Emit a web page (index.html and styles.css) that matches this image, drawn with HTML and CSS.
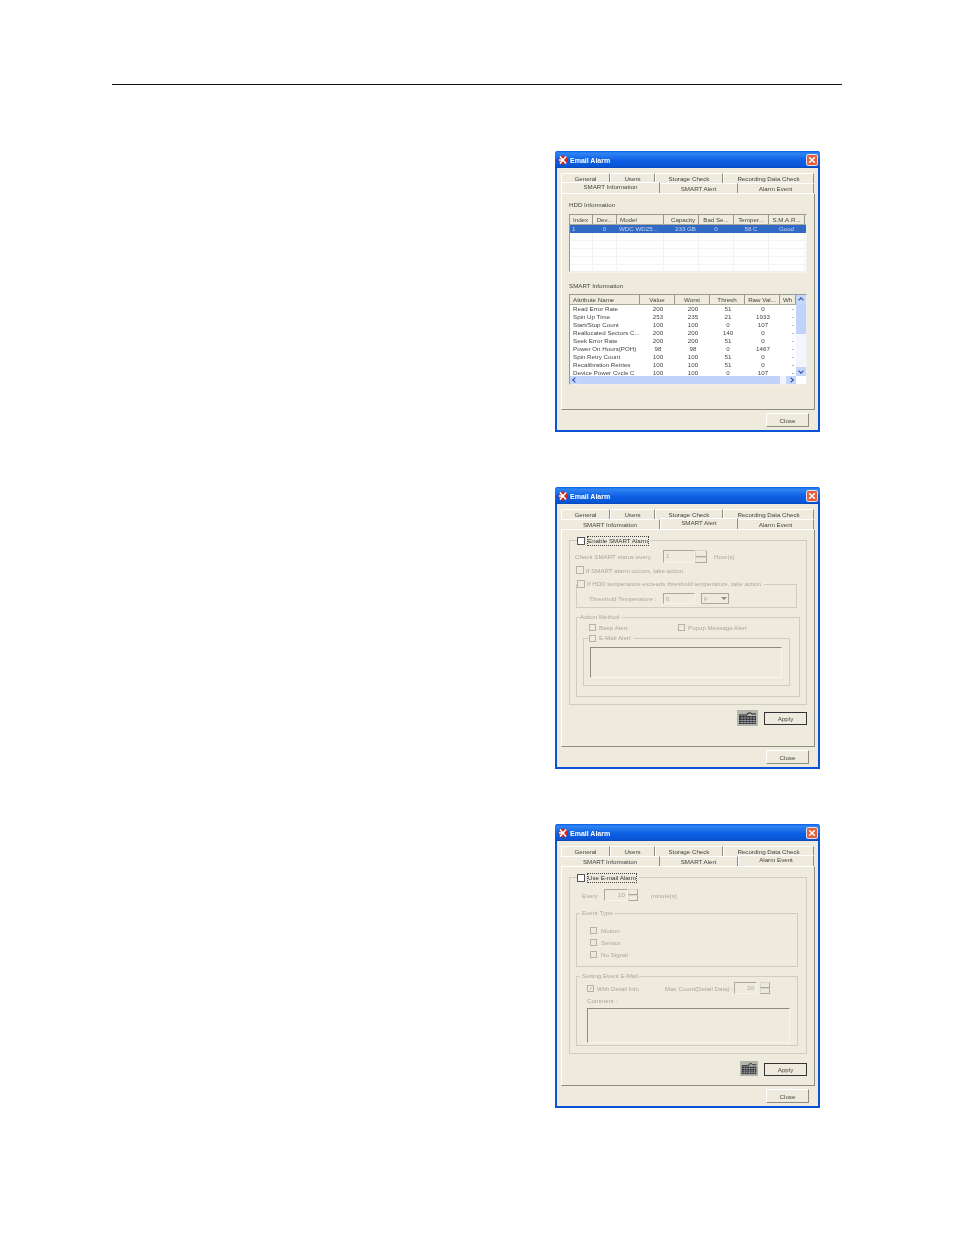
FILE: index.html
```html
<!DOCTYPE html>
<html lang="en">
<head>
<meta charset="utf-8">
<title>Email Alarm</title>
<link rel="stylesheet" href="styles.css">
</head>
<body>
<svg class="defs" width="0" height="0" aria-hidden="true">
  <symbol id="app" viewBox="0 0 10 10"><circle cx="5" cy="5" r="4.5" fill="#c8281e"/><path d="M2 1.5 8 8.5M8 1.5 2 8.5M1 5h4" stroke="#fff" stroke-width="1.6" fill="none"/></symbol>
  <symbol id="x" viewBox="0 0 12 12"><rect x=".5" y=".5" width="11" height="11" rx="1.5" fill="#e2603a" stroke="#fff" stroke-width=".8"/><path d="M3.2 3.2l5.600 5.600M8.800 3.200 3.200 8.800" stroke="#fff" stroke-width="1.5"/></symbol>
  <symbol id="kb" viewBox="0 0 21 16" preserveAspectRatio="none"><rect width="21" height="16" fill="#b4b5ac"/><path d="M2 5h8l1-2h3l1 1h4" stroke="#222" stroke-width="1" fill="none"/><rect x="2" y="6" width="17" height="8" fill="#23262b"/><path d="M2 8h17M2 10.500h17M2 12.500h17M5 6v8M8 6v8M11 6v8M14 6v8M17 6v8" stroke="#b9bdbf" stroke-width=".6"/></symbol>
</svg>
<main class="page">
  <hr class="rule">

  <section class="dialog d1">
    <header class="title"><svg class="app"><use href="#app"/></svg><span class="caption">Email Alarm</span><svg class="close-x"><use href="#x"/></svg></header>
    <div class="body">
      <div class="tabs">
        <div class="tabrow"><span class="tab w49">General</span><span class="tab w45">Users</span><span class="tab w68">Storage Check</span><span class="tab w91">Recording Data Check</span></div>
        <div class="tabrow"><span class="tab w99 on">SMART Information</span><span class="tab w78">SMART Alert</span><span class="tab w76">Alarm Event</span></div>
      </div>
      <div class="panel p1">
        <h2 class="head first">HDD Information</h2>
        <div class="list hdd">
          <div class="hrow hddcols"><span class="l">Index</span><span>Dev...</span><span class="l">Model</span><span class="r">Capacity</span><span>Bad Se...</span><span>Temper...</span><span>S.M.A.R...</span></div>
          <div class="row hddcols sel"><span class="l">1</span><span>0</span><span class="l">WDC WD25...</span><span class="r">233 GB</span><span>0</span><span>58 C</span><span>Good</span></div>
          <div class="row hddcols"><span></span><span></span><span></span><span></span><span></span><span></span><span></span></div>
          <div class="row hddcols"><span></span><span></span><span></span><span></span><span></span><span></span><span></span></div>
          <div class="row hddcols"><span></span><span></span><span></span><span></span><span></span><span></span><span></span></div>
          <div class="row hddcols"><span></span><span></span><span></span><span></span><span></span><span></span><span></span></div>
          <div class="row hddcols"><span></span><span></span><span></span><span></span><span></span><span></span><span></span></div>
        </div>
        <h2 class="head second">SMART Information</h2>
        <div class="list smart">
          <div class="smart-main">
            <div class="hrow smartcols"><span class="l">Attribute Name</span><span>Value</span><span>Worst</span><span>Thresh</span><span>Raw Val...</span><span class="l">Wh</span></div>
            <div class="smart-rows">
              <div class="srow smartcols"><span class="l">Read Error Rate</span><span>200</span><span>200</span><span>51</span><span>0</span><span>-</span></div>
              <div class="srow smartcols"><span class="l">Spin Up Time</span><span>253</span><span>235</span><span>21</span><span>1933</span><span>-</span></div>
              <div class="srow smartcols"><span class="l">Start/Stop Count</span><span>100</span><span>100</span><span>0</span><span>107</span><span>-</span></div>
              <div class="srow smartcols"><span class="l">Reallocated Sectors C...</span><span>200</span><span>200</span><span>140</span><span>0</span><span>-</span></div>
              <div class="srow smartcols"><span class="l">Seek Error Rate</span><span>200</span><span>200</span><span>51</span><span>0</span><span>-</span></div>
              <div class="srow smartcols"><span class="l">Power On Hours(POH)</span><span>98</span><span>98</span><span>0</span><span>1467</span><span>-</span></div>
              <div class="srow smartcols"><span class="l">Spin Retry Count</span><span>100</span><span>100</span><span>51</span><span>0</span><span>-</span></div>
              <div class="srow smartcols"><span class="l">Recalibration Retries</span><span>100</span><span>100</span><span>51</span><span>0</span><span>-</span></div>
              <div class="srow smartcols"><span class="l">Device Power Cycle C</span><span>100</span><span>100</span><span>0</span><span>107</span><span>-</span></div>
            </div>
          </div>
          <div class="vscroll"><span class="sb-btn up"></span><span class="vthumb"></span><span class="vtrack"></span><span class="sb-btn down"></span></div>
          <div class="hscroll"><span class="sb-btn left"></span><span class="hthumb"></span><span class="sb-btn right"></span></div>
        </div>
      </div>
      <footer class="foot"><button class="btn">Close</button></footer>
    </div>
  </section>

  <section class="dialog d2">
    <header class="title"><svg class="app"><use href="#app"/></svg><span class="caption">Email Alarm</span><svg class="close-x"><use href="#x"/></svg></header>
    <div class="body">
      <div class="tabs">
        <div class="tabrow"><span class="tab w49">General</span><span class="tab w45">Users</span><span class="tab w68">Storage Check</span><span class="tab w91">Recording Data Check</span></div>
        <div class="tabrow"><span class="tab w99">SMART Information</span><span class="tab w78 on">SMART Alert</span><span class="tab w76">Alarm Event</span></div>
      </div>
      <div class="panel p2">
        <div class="fs outer a1">
          <div class="legend lg-enable"><i class="cb live"></i><span class="focus">Enable SMART Alarm</span></div>
          <div class="line status dim"><span class="t-status">Check SMART status every</span><span class="input i-hours">1</span><span class="spin"><b></b><b></b></span><span class="t-hours">Hour(s)</span></div>
          <div class="line occur dim"><i class="cb big"></i><span>If SMART alarm occurs, take action.</span></div>
          <div class="fs hddtemp dim">
            <div class="legend lg-temp"><i class="cb big"></i><span>If HDD temperature exceeds threshold temperature, take action</span></div>
            <div class="line thresh"><span class="t-thresh">Threshold Temperature :</span><span class="input i-thresh">0</span><span class="select">F<b></b></span></div>
          </div>
          <div class="fs action dim">
            <div class="legend lg-action"><span>Action Method</span></div>
            <div class="line beep"><i class="cb"></i><span class="t-beep">Beep Alert</span><i class="cb"></i><span>Popup Message Alert</span></div>
            <div class="fs email">
              <div class="legend lg-email"><i class="cb"></i><span>E-Mail Alert</span></div>
              <div class="textarea t-email"></div>
            </div>
          </div>
        </div>
        <div class="actions a2"><svg class="kb kb2"><use href="#kb"/></svg><button class="btn apply">Apply</button></div>
      </div>
      <footer class="foot"><button class="btn">Close</button></footer>
    </div>
  </section>

  <section class="dialog d3">
    <header class="title"><svg class="app"><use href="#app"/></svg><span class="caption">Email Alarm</span><svg class="close-x"><use href="#x"/></svg></header>
    <div class="body">
      <div class="tabs">
        <div class="tabrow"><span class="tab w49">General</span><span class="tab w45">Users</span><span class="tab w68">Storage Check</span><span class="tab w91">Recording Data Check</span></div>
        <div class="tabrow"><span class="tab w99">SMART Information</span><span class="tab w78">SMART Alert</span><span class="tab w76 on">Alarm Event</span></div>
      </div>
      <div class="panel p3">
        <div class="fs outer a3">
          <div class="legend lg-enable"><i class="cb live"></i><span class="focus">Use E-mail Alarm</span></div>
          <div class="line every dim"><span class="t-every">Every</span><span class="input i-every">10</span><span class="spin"><b></b><b></b></span><span class="t-min">minute(s)</span></div>
          <div class="fs evtype dim">
            <div class="legend lg-plain"><span>Event Type</span></div>
            <div class="line ev ev1"><i class="cb"></i><span>Motion</span></div>
            <div class="line ev"><i class="cb"></i><span>Sensor</span></div>
            <div class="line ev"><i class="cb"></i><span>No Signal</span></div>
          </div>
          <div class="fs setting dim">
            <div class="legend lg-plain"><span>Setting Event E-Mail</span></div>
            <div class="line detail"><i class="cb checked">&#10003;</i><span class="t-detail">With Detail Info</span><span class="t-max">Max Count(Detail Data) :</span><span class="input i-max">20</span><span class="spin"><b></b><b></b></span></div>
            <div class="line comment"><span>Comment :</span></div>
            <div class="textarea t-comment"></div>
          </div>
        </div>
        <div class="actions a4"><svg class="kb kb3"><use href="#kb"/></svg><button class="btn apply">Apply</button></div>
      </div>
      <footer class="foot"><button class="btn">Close</button></footer>
    </div>
  </section>
</main>
</body>
</html>
```
FILE: styles.css
```css
* { box-sizing: border-box; }
html, body { margin: 0; padding: 0; background: #fff; }
body { font-family: "Liberation Sans", Arial, sans-serif; font-size: 6.2px; color: #45453f; }
.defs { position: absolute; }
.page { height: 1235px; padding-top: 84px; overflow: hidden; }
.rule { height: 1px; margin: 0 112px; border: 0; background: #111; }

.dialog { width: 265px; margin-left: 555px; background: #eeebde; border: 2px solid #0a52d8; border-top: 0; border-radius: 3px 3px 0 0; filter: blur(.25px); }
.d1 { height: 281px; margin-top: 66px; }
.d2 { height: 282px; margin-top: 55px; }
.d3 { height: 284px; margin-top: 55px; }

.title { display: flex; align-items: center; height: 17px; margin: 0 -2px; padding: 0 2px 0 3px; border-radius: 3px 3px 0 0; background: linear-gradient(#0a5ce6, #2f86f2 12%, #0c5fe3 55%, #0a55d6 90%, #0846b8); color: #fff; font-weight: 700; font-size: 7px; }
.caption { padding-top: 1px; }
.app { width: 10px; height: 10px; margin-right: 2px; }
.close-x { width: 12px; height: 12px; margin-left: auto; }

.body { padding: 5px 3px 0 4px; }
.tabrow { display: flex; height: 10px; }
.tab { display: block; height: 10px; line-height: 9px; text-align: center; border-right: 1px solid #8f8d80; border-top: 1px solid #fff; white-space: nowrap; }
.tabrow:first-child .tab { border-left: 1px solid #fff; }
.tab.on { position: relative; z-index: 1; height: 11px; margin-top: -1px; line-height: 8px; background: #eeebde; border-left: 1px solid #fff; border-top: 1px solid #fff; }
.w49 { width: 49px; } .w45 { width: 45px; } .w68 { width: 68px; } .w91 { width: 91px; }
.w99 { width: 99px; } .w78 { width: 78px; } .w76 { width: 76px; }

.panel { width: 254px; padding: 0 7px; border: 1px solid #8f8d80; border-top-color: #fff; border-left-color: #fff; }
.p1 { height: 217px; } .p2 { height: 218px; } .p3 { height: 220px; }

.head { height: 8px; margin: 0; font: inherit; line-height: 8px; }
.first { margin-top: 7px; }
.second { margin-top: 10px; }

.list { width: 238px; background: #fff; border: 1px solid #9a9a8f; border-right-color: #eee; border-bottom-color: #eee; }
.hdd { height: 58px; margin-top: 5px; }
.smart { display: grid; grid-template-columns: 226px 10px; grid-template-rows: 81px 8px; height: 91px; margin-top: 4px; }
.hddcols, .smartcols { display: grid; }
.hddcols { grid-template-columns: 23px 24px 47px 35px 35px 35px 36px; }
.smartcols { grid-template-columns: 70px 35px 35px 35px 35px 16px; }
.hrow { height: 10px; line-height: 9px; text-align: center; background: #eeebde; border-bottom: 1px solid #aca899; }
.hrow > span { padding: 0 3px; border-right: 1px solid #9a988a; white-space: nowrap; overflow: hidden; }
.row { height: 8px; line-height: 8px; text-align: center; border-bottom: 1px solid #f3f3ef; }
.row > span { padding: 0 2px; border-right: 1px solid #f3f3ef; white-space: nowrap; overflow: hidden; }
.sel { background: #316ac5; color: #c9d6f0; border-bottom-color: #316ac5; }
.sel > span { border-right-color: #316ac5; }
.l { text-align: left; }
.r { text-align: right; }
.smart-rows { height: 70px; overflow: hidden; }
.srow { height: 8px; line-height: 8px; text-align: center; }
.srow > span { padding-left: 1px; }
.srow > span:last-child { padding-right: 2px; text-align: right; }
.srow .l { padding-left: 3px; white-space: nowrap; }

.vscroll { display: flex; flex-direction: column; background: #f3f5fc; }
.sb-btn { position: relative; display: block; flex: none; width: 100%; height: 9px; background: #c5d6fb; }
.sb-btn::after { content: ""; position: absolute; top: 50%; left: 50%; width: 3px; height: 3px; margin: -2px 0 0 -2px; border: solid #2a4aa0; border-width: 1px 0 0 1px; transform: rotate(45deg); }
.down::after { transform: rotate(225deg); margin-top: -3px; }
.left::after { transform: rotate(-45deg); }
.right::after { transform: rotate(135deg); }
.vthumb { flex: none; height: 30px; background: #c1d3fb; }
.vtrack { flex: 1; }
.hscroll { display: flex; grid-column: 1; background: #f3f5fc; }
.hscroll .sb-btn { width: 10px; height: 8px; }
.hthumb { flex: none; width: 200px; margin-right: 6px; background: #c1d3fb; }

.foot { display: flex; justify-content: flex-end; padding: 3px 6px 0 0; }
.btn { display: block; width: 43px; height: 14px; padding: 0; font: inherit; color: inherit; background: #eeebde; border: 1px solid #8f8d80; border-top-color: #fff; border-left-color: #fff; }

.fs { position: relative; border: 1px solid #cfcdbd; }
.legend { position: absolute; top: -5px; display: flex; align-items: center; gap: 3px; height: 8px; line-height: 8px; padding-right: 3px; background: #eeebde; white-space: nowrap; }
.dim { color: #aaa898; }
.cb { display: block; flex: none; width: 7px; height: 7px; background: #eeebde; border: 1px solid #b5b3a5; font-style: normal; font-size: 5px; line-height: 5px; text-align: center; }
.cb.big { width: 8px; height: 8px; }
.cb.live { width: 8px; height: 8px; background: #fff; border-color: #555; }
.focus { outline: 1px dotted #444; color: #35352f; }
.line { display: flex; align-items: center; }
.input { display: block; flex: none; height: 12px; line-height: 10px; padding: 0 2px; border: 1px solid #aaa898; border-right-color: #f5f4ea; border-bottom-color: #f5f4ea; }
.spin { display: flex; flex-direction: column; flex: none; height: 12px; }
.spin b { display: block; flex: 1; background: #eeebde; border: 1px solid #d8d6c8; border-right-color: #aaa898; border-bottom-color: #aaa898; }
.textarea { border: 1px solid #8f8d80; border-right-color: #f8f7ee; border-bottom-color: #f8f7ee; }
.actions { display: flex; align-items: center; justify-content: flex-end; gap: 6px; height: 16px; }
.apply { height: 13px; border: 1px solid #333; }
.kb { display: block; flex: none; margin-top: -1px; }
.kb2 { width: 21px; height: 16px; }
.kb3 { width: 18px; height: 15px; }
.lg-enable { left: 7px; top: -4px; }

/* SMART Alert panel */
.outer { width: 238px; }
.a1 { height: 165px; margin-top: 10px; }
.a2 { margin-top: 5px; }
.status { height: 13px; margin-top: 9px; padding-left: 5px; }
.t-status { width: 88px; }
.i-hours { width: 32px; height: 13px; }
.status .spin { width: 12px; height: 13px; }
.t-hours { margin-left: 7px; }
.occur { height: 8px; margin-top: 3px; padding-left: 6px; gap: 2px; }
.hddtemp { width: 221px; height: 24px; margin: 10px 0 0 6px; }
.lg-temp { left: 0; gap: 2px; }
.thresh { height: 11px; margin-top: 8px; padding-left: 12px; }
.t-thresh { width: 74px; }
.i-thresh { width: 32px; height: 11px; }
.select { position: relative; display: block; width: 28px; height: 11px; margin-left: 6px; padding-left: 2px; line-height: 9px; border: 1px solid #aaa898; }
.select b { position: absolute; top: 0; right: 0; width: 8px; height: 9px; background: #eeebde; }
.select b::after { content: ""; position: absolute; top: 3px; left: 1px; border: 3px solid transparent; border-top-color: #8f8d80; }
.action { width: 224px; height: 80px; margin: 9px 0 0 6px; }
.lg-action { left: 3px; padding-right: 2px; }
.beep { height: 8px; margin-top: 5px; padding-left: 12px; gap: 3px; }
.t-beep { width: 76px; }
.email { width: 207px; height: 48px; margin: 7px 0 0 6px; }
.lg-email { left: 5px; }
.t-email { width: 192px; height: 31px; margin: 8px 0 0 6px; }

/* Alarm Event panel */
.a3 { height: 177px; margin-top: 10px; }
.a4 { margin-top: 7px; }
.every { height: 12px; margin-top: 11px; padding-left: 12px; }
.t-every { width: 22px; }
.i-every { width: 24px; text-align: right; }
.every .spin { width: 10px; }
.t-min { margin-left: 13px; }
.evtype { width: 222px; height: 54px; margin: 12px 0 0 6px; }
.lg-plain { left: 3px; padding: 0 1px 0 2px; }
.ev { height: 8px; margin-top: 4px; padding-left: 13px; gap: 4px; }
.ev1 { margin-top: 12px; }
.setting { width: 222px; height: 70px; margin: 9px 0 0 6px; }
.detail { height: 12px; margin-top: 5px; padding-left: 10px; gap: 3px; }
.t-detail { width: 65px; }
.t-max { width: 66px; white-space: nowrap; }
.i-max { width: 23px; text-align: right; }
.detail .spin { width: 10px; }
.comment { height: 8px; margin-top: 2px; padding-left: 10px; }
.t-comment { width: 203px; height: 35px; margin: 4px 0 0 10px; }
```
